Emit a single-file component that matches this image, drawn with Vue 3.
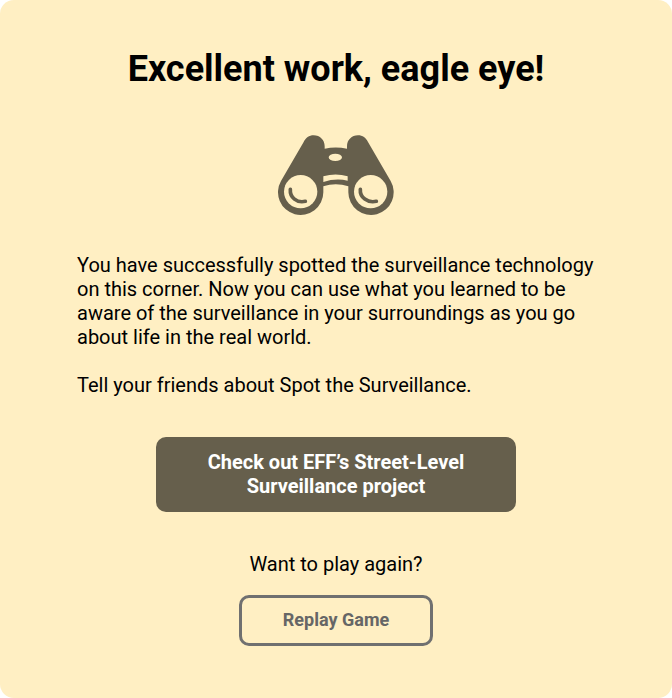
<script setup>
const heading = 'Excellent work, eagle eye!'

function replay() {
  window.location.reload()
}
</script>

<template>
  <main class="card">
    <h1 class="title">{{ heading }}</h1>

    <svg class="binoculars" viewBox="24 21 348 240" aria-hidden="true">
      <path
        class="body"
        fill-rule="evenodd"
        d="M33 159 L101 42 C107 30 117 22 131 22 C150 22 164 36 164 55 V62 Q197 55 231 62 V55 C231 36 245 22 264 22 C278 22 288 30 294 42 L362 159 A68 68 0 1 1 235 193 V175 Q197 163 160 175 V193 A68 68 0 1 1 33 159 Z
           M160 145 V162 Q197 150 233 158 V145 Q197 134 160 145 Z
           M176 88 a20 11 0 1 0 40 0 a20 11 0 1 0 -40 0 Z"
      />
      <circle class="lens" cx="92" cy="191" r="50" />
      <circle class="lens" cx="302" cy="191" r="50" />
      <path class="glint" d="M61 184 C59 208 81 226 106 220" />
      <path class="glint" d="M271 184 C269 208 293 226 319 220" />
    </svg>

    <div class="message">
      <p>
        You have successfully spotted the surveillance technology on this corner.
        Now you can use what you learned to be aware of the surveillance in your
        surroundings as you go about life in the real world.
      </p>
      <p>Tell your friends about Spot the Surveillance.</p>
    </div>

    <a class="project" href="https://www.eff.org/sls">Check out EFF’s Street-Level Surveillance project</a>

    <p class="question">Want to play again?</p>
    <button class="replay" type="button" @click="replay">Replay Game</button>
  </main>
</template>

<style>
body {
  background: #fff;
}
</style>

<style scoped>
.card {
  box-sizing: border-box;
  min-height: 100vh;
  display: flex;
  flex-direction: column;
  align-items: center;
  padding: 48px 77px 52px;
  border-radius: 14px;
  background: #ffefc3;
  color: #000;
  font-family: Roboto, "Liberation Sans", sans-serif;
  font-size: 20px;
  line-height: 24px;
}

p {
  margin: 0;
}

.title {
  margin: 0;
  font-size: 36px;
  line-height: 42px;
  font-weight: 700;
  text-align: center;
}

.binoculars {
  width: 116px;
  height: 80px;
  margin-top: 45px;
}

.body {
  fill: #665f4c;
}

.lens {
  fill: #ffefc3;
}

.glint {
  fill: none;
  stroke: #665f4c;
  stroke-width: 11;
  stroke-linecap: round;
}

.message {
  align-self: stretch;
  display: flex;
  flex-direction: column;
  gap: 24px;
  margin-top: 38px;
}

.project {
  box-sizing: border-box;
  width: 100%;
  max-width: 360px;
  margin-top: 40px;
  padding: 13px 40px 14px;
  border-radius: 10px;
  background: #665f4c;
  color: #fff;
  font-weight: 700;
  text-align: center;
  text-decoration: none;
}

.question {
  margin-top: 40px;
  text-align: center;
}

.replay {
  margin-top: 19px;
  padding: 10px 41px 11px;
  border: 3px solid #707070;
  border-radius: 10px;
  background: transparent;
  color: #666;
  font: inherit;
  font-size: 18px;
  font-weight: 700;
  cursor: pointer;
}
</style>
